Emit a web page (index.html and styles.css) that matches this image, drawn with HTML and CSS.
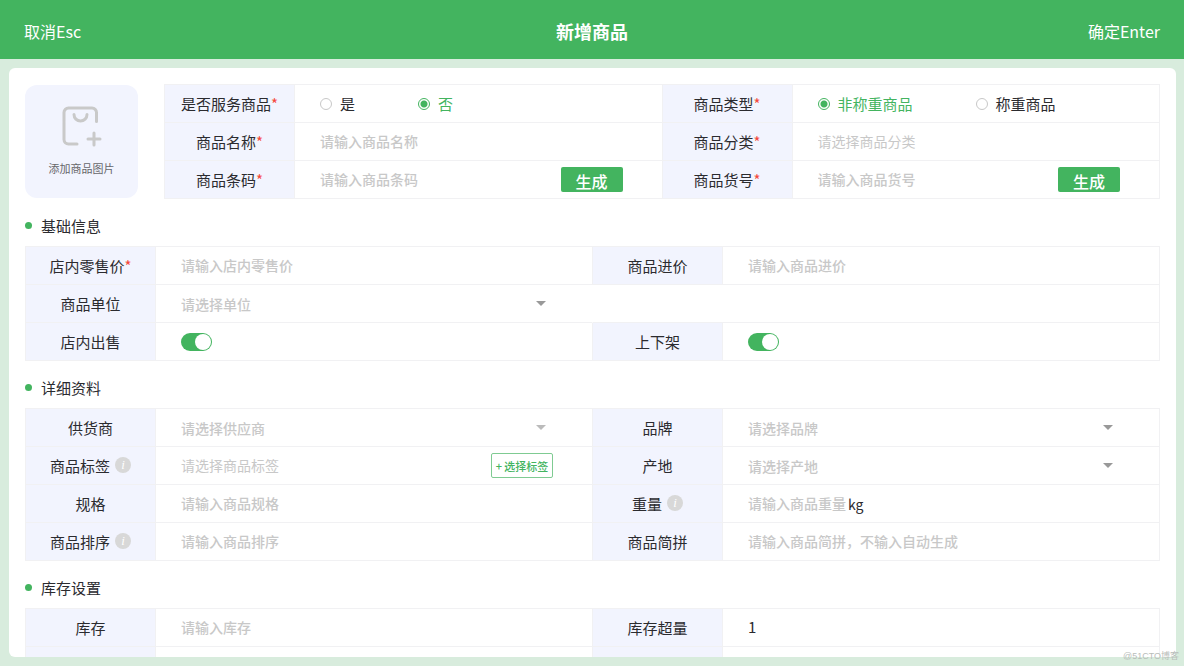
FILE: index.html
```html
<!DOCTYPE html>
<html lang="zh-CN">
<head>
<meta charset="utf-8">
<meta name="viewport" content="width=device-width, initial-scale=1">
<title>新增商品</title>
<link rel="stylesheet" href="styles.css">
</head>
<body>
<header class="topbar">
  <button type="button" class="topbar-btn">取消Esc</button>
  <h1 class="topbar-title">新增商品</h1>
  <button type="submit" form="product" class="topbar-btn topbar-btn-end">确定Enter</button>
</header>

<main class="page">
  <form class="card" id="product">
    <div class="intro">
      <button type="button" class="upload">
        <svg class="upload-icon" viewBox="0 0 40 41" fill="none" stroke="#c9c9c9" stroke-width="3" stroke-linecap="round" stroke-linejoin="round" aria-hidden="true">
          <path d="M34.5 15.500V6.500a4.500 4.500 0 0 0-4.500-4.500H6.500a4.500 4.500 0 0 0-4.500 4.500V33.500a4.500 4.500 0 0 0 4.500 4.500H15"/>
          <path d="M12 8.500a6.500 6.500 0 0 0 13 0"/>
          <path d="M32 27v12M26 33h12"/>
        </svg>
        <span>添加商品图片</span>
      </button>

      <div class="grid intro-grid">
        <div class="label">是否服务商品<span class="req">*</span></div>
        <div class="value radios" role="radiogroup" aria-label="是否服务商品">
          <label class="radio"><input type="radio" name="service"><span>是</span></label>
          <label class="radio"><input type="radio" name="service" checked><span>否</span></label>
        </div>
        <div class="label">商品类型<span class="req">*</span></div>
        <div class="value radios" role="radiogroup" aria-label="商品类型">
          <label class="radio"><input type="radio" name="kind" checked><span>非称重商品</span></label>
          <label class="radio"><input type="radio" name="kind"><span>称重商品</span></label>
        </div>

        <label class="label" for="name">商品名称<span class="req">*</span></label>
        <div class="value"><input class="text" id="name" type="text" placeholder="请输入商品名称"></div>
        <label class="label" for="category">商品分类<span class="req">*</span></label>
        <div class="value"><input class="text text-pick" id="category" type="text" readonly placeholder="请选择商品分类"></div>

        <label class="label" for="barcode">商品条码<span class="req">*</span></label>
        <div class="value"><input class="text" id="barcode" type="text" placeholder="请输入商品条码"><button type="button" class="generate">生成</button></div>
        <label class="label" for="sku">商品货号<span class="req">*</span></label>
        <div class="value"><input class="text" id="sku" type="text" placeholder="请输入商品货号"><button type="button" class="generate">生成</button></div>
      </div>
    </div>

    <h2 class="section">基础信息</h2>
    <div class="grid">
      <label class="label" for="price">店内零售价<span class="req">*</span></label>
      <div class="value"><input class="text" id="price" type="text" placeholder="请输入店内零售价"></div>
      <label class="label" for="cost">商品进价</label>
      <div class="value"><input class="text" id="cost" type="text" placeholder="请输入商品进价"></div>

      <label class="label" for="unit">商品单位</label>
      <div class="value value-open"><div class="select"><select id="unit"><option>请选择单位</option></select></div></div>
      <div class="blank"></div>

      <label class="label" for="instore">店内出售</label>
      <div class="value"><input class="switch" id="instore" type="checkbox" checked></div>
      <label class="label" for="shelf">上下架</label>
      <div class="value"><input class="switch" id="shelf" type="checkbox" checked></div>
    </div>

    <h2 class="section">详细资料</h2>
    <div class="grid">
      <label class="label" for="supplier">供货商</label>
      <div class="value"><div class="select select-muted"><select id="supplier"><option>请选择供应商</option></select></div></div>
      <label class="label" for="brand">品牌</label>
      <div class="value"><div class="select"><select id="brand"><option>请选择品牌</option></select></div></div>

      <label class="label" for="tags">商品标签<span class="info">i</span></label>
      <div class="value"><input class="text text-pick" id="tags" type="text" readonly placeholder="请选择商品标签"><button type="button" class="add-tag">+ 选择标签</button></div>
      <label class="label" for="origin">产地</label>
      <div class="value"><div class="select"><select id="origin"><option>请选择产地</option></select></div></div>

      <label class="label" for="spec">规格</label>
      <div class="value"><input class="text" id="spec" type="text" placeholder="请输入商品规格"></div>
      <label class="label" for="weight">重量<span class="info">i</span></label>
      <div class="value"><input class="text text-short" id="weight" type="text" placeholder="请输入商品重量"><span class="suffix">kg</span></div>

      <label class="label" for="order">商品排序<span class="info">i</span></label>
      <div class="value"><input class="text" id="order" type="text" placeholder="请输入商品排序"></div>
      <label class="label" for="pinyin">商品简拼</label>
      <div class="value"><input class="text" id="pinyin" type="text" placeholder="请输入商品简拼，不输入自动生成"></div>
    </div>

    <h2 class="section">库存设置</h2>
    <div class="grid">
      <label class="label" for="stock">库存</label>
      <div class="value"><input class="text" id="stock" type="text" placeholder="请输入库存"></div>
      <label class="label" for="over">库存超量</label>
      <div class="value"><input class="text" id="over" type="text" value="1"></div>

      <div class="label"></div>
      <div class="value"></div>
      <div class="label"></div>
      <div class="value"></div>
    </div>
  </form>
</main>
<div class="watermark">@51CTO博客</div>
</body>
</html>
```

FILE: styles.css
```css
:root {
  --green: #43b45f;
  --line: #f1f1f3;
  --tint: #f2f4fe;
  --ink: #2b2b2f;
  --hint: #c8c8c8;
}

* {
  box-sizing: border-box;
}

body {
  margin: 0;
  height: 100vh;
  display: flex;
  flex-direction: column;
  background: #d8ecdd;
  color: var(--ink);
  font-family: "Noto Sans CJK SC", "Noto Sans", sans-serif;
  font-size: 15px;
  line-height: 20px;
}

button,
input,
select {
  margin: 0;
  padding: 0;
  border: 0;
  background: none;
  font: inherit;
  color: inherit;
}

.topbar {
  flex: none;
  display: grid;
  grid-template-columns: 1fr auto 1fr;
  align-items: center;
  height: 59px;
  padding: 2px 24px 0;
  background: var(--green);
  color: #fff;
}

.topbar-btn {
  justify-self: start;
  font-size: 16px;
  line-height: 22px;
}

.topbar-btn-end {
  justify-self: end;
}

.topbar-title {
  margin: 0;
  font-size: 18px;
  font-weight: 700;
  line-height: 22px;
}

.page {
  flex: 1;
  min-height: 0;
  display: flex;
  padding: 9px 8px 9px 9px;
}

.card {
  flex: 1;
  min-width: 0;
  padding: 16px 16px 0;
  overflow: hidden;
  border-radius: 6px;
  background: #fff;
}

.intro {
  display: flex;
  align-items: center;
  gap: 26px;
}

.upload {
  flex: none;
  display: flex;
  flex-direction: column;
  align-items: center;
  gap: 11px;
  width: 113px;
  height: 113px;
  padding-top: 21px;
  border-radius: 12px;
  background: var(--tint);
  color: #66666a;
  font-size: 11px;
}

.upload-icon {
  width: 40px;
  height: 41px;
}

.grid {
  display: grid;
  grid-template-columns: 130px 1fr 130px 1fr;
  grid-auto-rows: 38px;
  border-top: 1px solid var(--line);
  border-left: 1px solid var(--line);
}

.intro-grid {
  flex: 1;
}

.label {
  display: flex;
  align-items: center;
  justify-content: center;
  padding-top: 1px;
  border-right: 1px solid var(--line);
  border-bottom: 1px solid var(--line);
  background: var(--tint);
}

.value {
  min-width: 0;
  display: flex;
  align-items: center;
  padding: 0 39px 0 25px;
  border-right: 1px solid var(--line);
  border-bottom: 1px solid var(--line);
}

.value-open {
  border-right-color: transparent;
}

.blank {
  grid-column: span 2;
  border-right: 1px solid var(--line);
  border-bottom: 1px solid var(--line);
}

.req {
  color: #f5483b;
}

.info {
  width: 16px;
  height: 16px;
  margin: 0 0 2px 5px;
  border-radius: 50%;
  background: #d8d8d8;
  color: #fff;
  font: italic 13px/16px "Liberation Serif", serif;
  text-align: center;
}

.radios {
  gap: 63px;
}

.radio {
  display: flex;
  align-items: center;
  gap: 8px;
}

.radio span {
  padding-top: 1px;
}

.radio input {
  appearance: none;
  width: 12px;
  height: 12px;
  border: 1px solid #c8c8c8;
  border-radius: 50%;
}

.radio input:checked {
  border-color: var(--green);
  background: radial-gradient(circle, var(--green) 3px, #fff 4px);
}

.radio input:checked + span {
  color: var(--green);
}

.text {
  flex: 1;
  min-width: 0;
  height: 22px;
  margin-bottom: 2px;
  outline: 0;
}

.text::placeholder {
  color: var(--hint);
  font-size: 14px;
  font-weight: 500;
}

.text-pick::placeholder {
  font-weight: 400;
}

.text-short {
  flex: none;
  width: 100px;
}

.suffix {
  font-size: 14px;
}

.generate {
  flex: none;
  width: 62px;
  height: 25px;
  padding-top: 2px;
  border-radius: 2px;
  background: var(--green);
  color: #fff;
  font-size: 16px;
  font-weight: 500;
}

.add-tag {
  flex: none;
  width: 62px;
  height: 25px;
  border: 1px solid #7fcb92;
  border-radius: 2px;
  color: var(--green);
  font-size: 11px;
  font-weight: 500;
  line-height: 22px;
  white-space: nowrap;
}

.select {
  flex: 1;
  display: flex;
  align-items: center;
  padding-right: 7px;
}

.select select {
  flex: 1;
  appearance: none;
  color: var(--hint);
  font-size: 14px;
  font-weight: 500;
}

.select::after {
  content: "";
  border: 5px solid transparent;
  border-top-color: #999;
  border-bottom: 0;
}

.select-muted::after {
  border-top-color: #bbb;
}

.switch {
  appearance: none;
  display: flex;
  justify-content: flex-end;
  width: 31px;
  height: 18px;
  padding: 1px;
  border-radius: 9px;
  background: var(--green);
}

.switch::before {
  content: "";
  width: 16px;
  height: 16px;
  border-radius: 50%;
  background: #fff;
}

.section {
  display: flex;
  align-items: center;
  gap: 9px;
  height: 47px;
  margin: 0;
  padding-top: 6px;
  font-size: 15px;
  font-weight: 400;
}

.section::before {
  content: "";
  width: 7px;
  height: 7px;
  border-radius: 50%;
  background: var(--green);
}

.watermark {
  position: absolute;
  right: 5px;
  bottom: 4px;
  color: #b9bdba;
  font-family: "Liberation Sans", "Noto Sans CJK SC", sans-serif;
  font-size: 9px;
  line-height: 12px;
}
```
